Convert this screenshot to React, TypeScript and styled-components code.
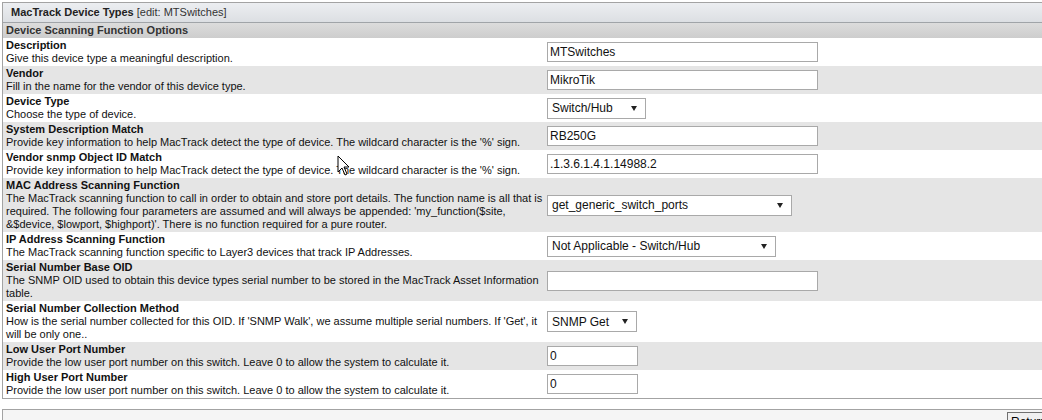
import React from "react";
import styled, { createGlobalStyle } from "styled-components";

const Global = createGlobalStyle`
  html, body { margin: 0; padding: 0; background: #fff; overflow: hidden; }
  body { font-family: "Liberation Sans", Arial, sans-serif; font-size: 11px; color: #000; }
`;

const Page = styled.div`
  padding: 2px 0 0 2px;
  width: 1060px;
  position: relative;
`;

const Panel = styled.div`
  border: 1px solid #a3a3a3;
  border-right: none;
`;

const TitleBar = styled.div`
  height: 19px;
  line-height: 19px;
  padding-left: 8px;
  background: linear-gradient(#eceef1, #dcdfe3);
  border-bottom: 1px solid #a0a4a8;
  font-size: 11px;
  color: #333;
`;

const TitleStrong = styled.span`
  font-weight: bold;
  color: #222;
`;

const SectionBar = styled.div`
  height: 15px;
  line-height: 15px;
  padding-left: 3px;
  background: linear-gradient(#dcdcdc, #cdcdcd);
  font-weight: bold;
  font-size: 11px;
  color: #333;
`;

const Row = styled.div<{ $alt: boolean }>`
  display: flex;
  align-items: center;
  background: ${(p) => (p.$alt ? "#e5e5e5" : "#ffffff")};
  min-height: 28px;
`;

const LabelCell = styled.div`
  width: 541px;
  flex: none;
  padding: 1px 0 1px 3px;
  box-sizing: border-box;
  align-self: stretch;
  display: flex;
  flex-direction: column;
  justify-content: center;
`;

const Label = styled.div`
  font-weight: bold;
  font-size: 11px;
  line-height: 13px;
  color: #111;
`;

const Desc = styled.div`
  font-size: 11px;
  line-height: 13px;
  color: #111;
`;

const ControlCell = styled.div`
  flex: 1;
  padding-left: 3px;
  display: flex;
  align-items: center;
`;

const TextInput = styled.input<{ $w: number }>`
  width: ${(p) => p.$w}px;
  height: 20px;
  box-sizing: border-box;
  border: 1px solid #a9a9a9;
  padding: 0 2px;
  font-family: "Liberation Sans", Arial, sans-serif;
  font-size: 12px;
  color: #111;
  background: #fff;
  outline: none;
`;

const SelectBox = styled.div<{ $w: number }>`
  width: ${(p) => p.$w}px;
  height: 21px;
  box-sizing: border-box;
  border: 1px solid #a9a9a9;
  background: #fff;
  display: flex;
  align-items: center;
  justify-content: space-between;
  padding: 0 8px 0 4px;
  font-size: 12px;
  color: #111;
`;

const Arrow = styled.span`
  width: 0;
  height: 0;
  border-left: 3px solid transparent;
  border-right: 3px solid transparent;
  border-top: 5px solid #222;
`;

const Footer = styled.div`
  margin-top: 10px;
  border: 1px solid #a3a3a3;
  border-right: none;
  background: #f5f5f5;
  height: 30px;
  display: flex;
  justify-content: flex-start;
  padding-left: 1004px;
  padding-top: 2px;
  box-sizing: border-box;
`;

const ReturnButton = styled.button`
  font-family: "Liberation Sans", Arial, sans-serif;
  font-size: 12px;
  line-height: 14px;
  height: 22px;
  padding: 2px 3px 0;
  border: 1px solid #707070;
  background: #f0f0f0;
  color: #000;
  display: flex;
  align-items: flex-start;
`;

const Cursor = styled.svg`
  position: absolute;
  left: 337px;
  top: 155px;
`;

type Ctl =
  | { kind: "text"; value: string; w: number }
  | { kind: "select"; value: string; w: number };

const rows: { label: string; desc: string; ctl: Ctl }[] = [
  { label: "Description", desc: "Give this device type a meaningful description.", ctl: { kind: "text", value: "MTSwitches", w: 271 } },
  { label: "Vendor", desc: "Fill in the name for the vendor of this device type.", ctl: { kind: "text", value: "MikroTik", w: 271 } },
  { label: "Device Type", desc: "Choose the type of device.", ctl: { kind: "select", value: "Switch/Hub", w: 99 } },
  { label: "System Description Match", desc: "Provide key information to help MacTrack detect the type of device. The wildcard character is the '%' sign.", ctl: { kind: "text", value: "RB250G", w: 271 } },
  { label: "Vendor snmp Object ID Match", desc: "Provide key information to help MacTrack detect the type of device. The wildcard character is the '%' sign.", ctl: { kind: "text", value: ".1.3.6.1.4.1.14988.2", w: 271 } },
  { label: "MAC Address Scanning Function", desc: "The MacTrack scanning function to call in order to obtain and store port details. The function name is all that is required. The following four parameters are assumed and will always be appended: 'my_function($site, &$device, $lowport, $highport)'. There is no function required for a pure router.", ctl: { kind: "select", value: "get_generic_switch_ports", w: 245 } },
  { label: "IP Address Scanning Function", desc: "The MacTrack scanning function specific to Layer3 devices that track IP Addresses.", ctl: { kind: "select", value: "Not Applicable - Switch/Hub", w: 229 } },
  { label: "Serial Number Base OID", desc: "The SNMP OID used to obtain this device types serial number to be stored in the MacTrack Asset Information table.", ctl: { kind: "text", value: "", w: 271 } },
  { label: "Serial Number Collection Method", desc: "How is the serial number collected for this OID. If 'SNMP Walk', we assume multiple serial numbers. If 'Get', it will be only one..", ctl: { kind: "select", value: "SNMP Get", w: 90 } },
  { label: "Low User Port Number", desc: "Provide the low user port number on this switch. Leave 0 to allow the system to calculate it.", ctl: { kind: "text", value: "0", w: 91 } },
  { label: "High User Port Number", desc: "Provide the low user port number on this switch. Leave 0 to allow the system to calculate it.", ctl: { kind: "text", value: "0", w: 91 } },
];

export default function App() {
  return (
    <Page>
      <Global />
      <Panel>
        <TitleBar>
          <TitleStrong>MacTrack Device Types</TitleStrong> [edit: MTSwitches]
        </TitleBar>
        <SectionBar>Device Scanning Function Options</SectionBar>
        {rows.map((r, i) => (
          <Row key={r.label} $alt={i % 2 === 1}>
            <LabelCell>
              <Label>{r.label}</Label>
              <Desc>{r.desc}</Desc>
            </LabelCell>
            <ControlCell>
              {r.ctl.kind === "text" ? (
                <TextInput $w={r.ctl.w} defaultValue={r.ctl.value} />
              ) : (
                <SelectBox $w={r.ctl.w}>
                  <span>{r.ctl.value}</span>
                  <Arrow />
                </SelectBox>
              )}
            </ControlCell>
          </Row>
        ))}
      </Panel>
      <Footer>
        <ReturnButton>Return</ReturnButton>
      </Footer>
      <Cursor width="14" height="22" viewBox="0 0 14 22">
        <path d="M1 1 L1 17 L5 13 L8 20 L10 19 L7 12 L12 12 Z" fill="#fff" stroke="#000" strokeWidth="1" />
      </Cursor>
    </Page>
  );
}
